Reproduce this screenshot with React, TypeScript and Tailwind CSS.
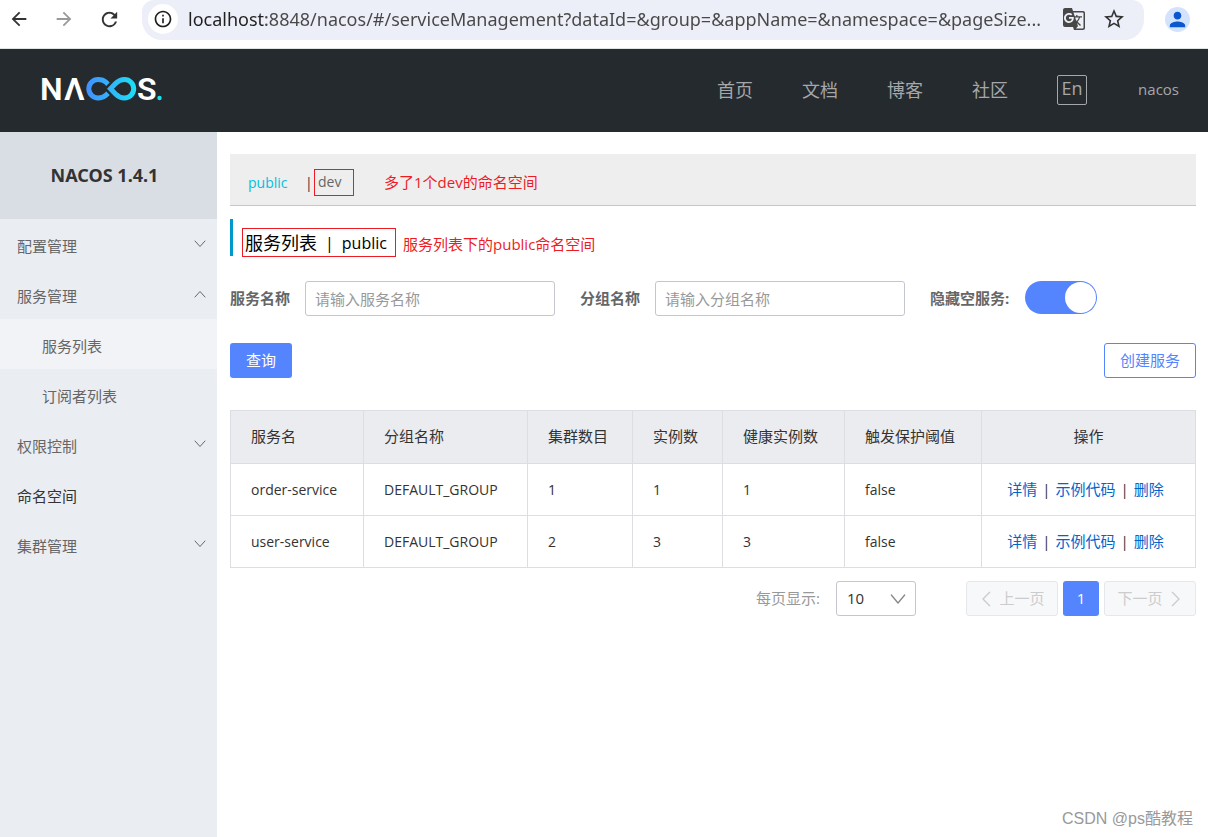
import { useState } from "react";
import {
  MdArrowBack,
  MdArrowForward,
  MdGTranslate,
  MdInfoOutline,
  MdPerson,
  MdRefresh,
  MdStarBorder,
} from "react-icons/md";

const NAV_LINKS = ["首页", "文档", "博客", "社区"];

const MENU = [
  { label: "配置管理", arrow: "down" },
  {
    label: "服务管理",
    arrow: "up",
    children: [{ label: "服务列表", active: true }, { label: "订阅者列表" }],
  },
  { label: "权限控制", arrow: "down" },
  { label: "命名空间" },
  { label: "集群管理", arrow: "down" },
];

const COLUMNS = [
  { title: "服务名", width: "w-[133px]" },
  { title: "分组名称", width: "w-[164px]" },
  { title: "集群数目", width: "w-[105px]" },
  { title: "实例数", width: "w-[90px]" },
  { title: "健康实例数", width: "w-[122px]" },
  { title: "触发保护阈值", width: "w-[137px]" },
];

const SERVICES = [
  { name: "order-service", group: "DEFAULT_GROUP", clusters: 1, instances: 1, healthy: 1 },
  { name: "user-service", group: "DEFAULT_GROUP", clusters: 2, instances: 3, healthy: 3 },
];

const URL_TEXT =
  "localhost:8848/nacos/#/serviceManagement?dataId=&group=&appName=&namespace=&pageSize...";

const Chevron = ({ points, className }: { points: string; className: string }) => (
  <svg
    viewBox="0 0 12 12"
    fill="none"
    stroke="currentColor"
    strokeLinecap="round"
    strokeLinejoin="round"
    className={className}
    aria-hidden="true"
  >
    <polyline points={points} />
  </svg>
);

const BrowserBar = () => (
  <div className="flex h-[49px] items-start border-b border-[#dfe3e1] bg-white">
    <div className="flex h-[38px] w-[142px] items-center gap-[23px] pl-2">
      <button type="button" aria-label="Back" className="text-[#333]">
        <MdArrowBack size={22} />
      </button>
      <button type="button" aria-label="Forward" className="text-[#999]">
        <MdArrowForward size={22} />
      </button>
      <button type="button" aria-label="Reload" className="text-[#333]">
        <MdRefresh size={23} />
      </button>
    </div>
    <div className="flex h-10 flex-1 items-center rounded-b-[20px] rounded-tl-xl rounded-tr-xl bg-[#eceef8] pr-[18px] pb-0.5 pl-1.5">
      <span className="flex size-[30px] shrink-0 items-center justify-center rounded-full bg-white text-[#1f1f1f]">
        <MdInfoOutline size={20} />
      </span>
      <input
        type="text"
        aria-label="Address"
        defaultValue={URL_TEXT}
        className="ml-2.5 min-w-0 flex-1 bg-[linear-gradient(90deg,#1f1f1f_78px,#474747_78px)] bg-clip-text font-['Noto_Sans',sans-serif] text-lg text-transparent outline-none"
      />
      <button type="button" aria-label="Translate" className="text-[#474747]">
        <MdGTranslate size={24} />
      </button>
      <button type="button" aria-label="Bookmark" className="ml-4 text-[#333]">
        <MdStarBorder size={24} />
      </button>
    </div>
    <button
      type="button"
      aria-label="Profile"
      className="mt-[7px] mr-[18px] ml-[21px] flex size-[25px] items-center justify-center rounded-full bg-[#d3e3fd] text-[#0b57d0]"
    >
      <MdPerson size={23} />
    </button>
  </div>
);

const Logo = () => (
  <svg width="128" height="44" viewBox="-2 -6 128 44" role="img" aria-label="NACOS">
    <defs>
      <linearGradient id="loop" gradientUnits="userSpaceOnUse" x1="46" y1="0" x2="96" y2="0">
        <stop offset="0" stopColor="#4390ff" />
        <stop offset="1" stopColor="#1be1f6" />
      </linearGradient>
    </defs>
    <g fill="#fff" fontFamily="Roboto, sans-serif" fontSize="32" fontWeight="600">
      <text x="-1" y="25">
        N
      </text>
      <text x="23" y="25">
        Λ
      </text>
      <text x="96" y="25">
        S
      </text>
    </g>
    <g fill="none" stroke="url(#loop)" strokeWidth="5">
      <path d="M67 9.200L65 7.300C62.500 5 60 4.500 57 4.500A9.200 9.200 0 0 0 57 22.900C60 22.900 62.500 22.300 65 20.100L67 18.200" />
      <path d="M69.500 13.700L74.500 8.500C77.500 5.500 80 4.500 83.500 4.500A9.200 9.200 0 0 1 83.500 22.900C80 22.900 77.500 21.900 74.500 18.900Z" />
    </g>
    <circle cx="118.500" cy="23" r="2.200" fill="#1be1f6" />
  </svg>
);

const Header = () => (
  <header className="flex h-[83px] items-center justify-between bg-[#252a2f] pr-[29px] pl-[39px] text-[#a5a7a9]">
    <a href="#home">
      <Logo />
    </a>
    <nav className="flex items-center pb-0.5 text-lg">
      {NAV_LINKS.map((link) => (
        <a key={link} href="#nav" className="mr-[49px]">
          {link}
        </a>
      ))}
      <button
        type="button"
        className="mr-[51px] size-[30px] rounded-xs border border-[#a5a7a9] pb-1 leading-6"
      >
        En
      </button>
      <a href="#user" className="text-[15px] font-medium">
        nacos
      </a>
    </nav>
  </header>
);

const Sidebar = () => (
  <aside className="w-[217px] shrink-0 bg-[#eaedf2] text-[15px] text-[#666]">
    <h1 className="flex h-[87px] items-center justify-center bg-[#d9dde4] pr-2 pb-0.5 font-['Noto_Sans',sans-serif] text-lg font-bold text-[#333]">
      NACOS 1.4.1
    </h1>
    <ul>
      {MENU.map((item) => (
        <li key={item.label}>
          <a
            href="#menu"
            className={`flex h-[50px] items-center justify-between pt-1 pr-[11px] pl-[17px] ${item.arrow ? "" : "text-[#333]"}`}
          >
            {item.label}
            {item.arrow && (
              <Chevron
                points={item.arrow === "up" ? "1,9 6,3.500 11,9" : "1,3 6,8.500 11,3"}
                className="mb-1 size-3"
              />
            )}
          </a>
          {item.children && (
            <ul>
              {item.children.map((child) => (
                <li key={child.label}>
                  <a
                    href="#menu"
                    className={`flex h-[50px] items-center pt-1 pl-[42px] ${child.active ? "bg-[#f2f3f7]" : ""}`}
                  >
                    {child.label}
                  </a>
                </li>
              ))}
            </ul>
          )}
        </li>
      ))}
    </ul>
  </aside>
);

const Filters = () => {
  const [hideEmpty, setHideEmpty] = useState(true);
  const inputClass =
    "ml-[15px] mr-[25px] h-[35px] w-[250px] rounded-[3px] border border-[#c4c6cf] px-[9px] text-[15px] placeholder:text-[#999]";

  return (
    <form className="mt-[25px] flex items-center text-[15px] text-[#666]">
      <label htmlFor="service" className="font-bold">
        服务名称
      </label>
      <input id="service" type="text" placeholder="请输入服务名称" className={inputClass} />
      <label htmlFor="group" className="font-bold">
        分组名称
      </label>
      <input id="group" type="text" placeholder="请输入分组名称" className={inputClass} />
      <label htmlFor="hide-empty" className="w-20 font-bold">
        隐藏空服务:
      </label>
      <input
        id="hide-empty"
        type="checkbox"
        role="switch"
        checked={hideEmpty}
        onChange={(event) => setHideEmpty(event.target.checked)}
        className="mb-0.5 ml-[15px] flex h-[33px] w-[72px] appearance-none rounded-full bg-gray-300 p-px before:size-[31px] before:rounded-full before:bg-white checked:justify-end checked:bg-[#5584ff]"
      />
    </form>
  );
};

const ServiceTable = () => (
  <table className="mt-8 w-full table-fixed border-collapse text-left text-[15px] text-[#333]">
    <thead>
      <tr className="h-[53px] bg-[#ebecf0]">
        {COLUMNS.map((col) => (
          <th
            key={col.title}
            className={`border border-[#dcdee3] pb-0.5 pl-5 font-normal whitespace-nowrap ${col.width}`}
          >
            {col.title}
          </th>
        ))}
        <th className="border border-[#dcdee3] pb-0.5 text-center font-normal">操作</th>
      </tr>
    </thead>
    <tbody>
      {SERVICES.map((row) => (
        <tr key={row.name} className="h-[52px]">
          {[row.name, row.group, row.clusters, row.instances, row.healthy, "false"].map(
            (cell, i) => (
              <td key={i} className="border border-[#dcdee3] pl-5 text-sm whitespace-nowrap">
                {cell}
              </td>
            )
          )}
          <td className="border border-[#dcdee3] whitespace-nowrap">
            <div className="flex justify-center gap-[5px] pr-1.5 text-[#06c]">
              <a href="#detail">详情</a>
              <span className="text-[#333]">|</span>
              <a href="#code">示例代码</a>
              <span className="text-[#333]">|</span>
              <a href="#delete">删除</a>
            </div>
          </td>
        </tr>
      ))}
    </tbody>
  </table>
);

const Pagination = () => {
  const stepClass =
    "flex h-[35px] w-[92px] items-center justify-center gap-1 rounded-[3px] border border-[#e6e7eb] bg-[#f7f8fa] text-[#ccc]";

  return (
    <div className="mt-[13px] flex items-center justify-end text-[15px]">
      <label htmlFor="page-size" className="mr-2 w-[72px] whitespace-nowrap text-[#999]">
        每页显示:
      </label>
      <div className="relative mr-[50px]">
        <select
          id="page-size"
          defaultValue="10"
          className="h-[35px] w-20 appearance-none rounded-[3px] border border-[#c4c6cf] bg-white pl-2.5 text-[#333]"
        >
          <option>10</option>
          <option>20</option>
          <option>50</option>
        </select>
        <Chevron
          points="1,3 6,9 11,3"
          className="pointer-events-none absolute top-2.5 right-2.5 size-4 text-[#888]"
        />
      </div>
      <button type="button" disabled className={stepClass}>
        <Chevron points="8,1 3,6 8,11" className="size-4" />
        上一页
      </button>
      <button type="button" className="mx-[5px] h-[35px] w-9 rounded-[3px] bg-[#5584ff] text-white">
        1
      </button>
      <button type="button" disabled className={stepClass}>
        下一页
        <Chevron points="4,1 9,6 4,11" className="size-4" />
      </button>
    </div>
  );
};

const App = () => (
  <div className="relative flex min-h-screen flex-col bg-white font-['Open_Sans','Noto_Sans_CJK_SC',sans-serif]">
    <BrowserBar />
    <Header />
    <div className="flex flex-1">
      <Sidebar />
      <main className="min-w-0 flex-1 pt-[22px] pr-3 pl-[13px]">
        <div className="flex h-[52px] items-center border-b border-[#c7c7c7] bg-[#eee] pt-1.5 pl-[18px] text-sm text-[#666]">
          <a href="#public" className="w-[57px] text-[#00c1de]">
            public
          </a>
          <span className="w-[9px] text-[#333]">|</span>
          <a href="#dev" className="h-[27px] w-10 border border-[#ed1c24] pl-[3px] leading-6">
            dev
          </a>
          <span className="ml-[30px] text-[15px] text-[#ed1c24]">多了1个dev的命名空间</span>
        </div>
        <div className="mt-[13px] flex h-[37px] border-l-3 border-[#09c] pl-[9px]">
          <h2 className="mt-[9px] flex h-[29px] w-[154px] shrink-0 items-center gap-2 border border-[#ed1c24] pl-0.5 text-base whitespace-nowrap text-black">
            <span className="text-lg">服务列表</span>
            <span>|</span>
            <span>public</span>
          </h2>
          <span className="mt-[14px] ml-[7px] text-[15px] whitespace-nowrap text-[#ed1c24]">
            服务列表下的public命名空间
          </span>
        </div>
        <Filters />
        <div className="mt-[27px] flex justify-between text-[15px]">
          <button type="button" className="h-[35px] w-[62px] rounded-[3px] bg-[#5584ff] text-white">
            查询
          </button>
          <button
            type="button"
            className="h-[35px] w-[92px] rounded-[3px] border border-[#5584ff] text-[#5584ff]"
          >
            创建服务
          </button>
        </div>
        <ServiceTable />
        <Pagination />
      </main>
    </div>
    <span className="absolute right-[15px] bottom-1.5 font-['Liberation_Sans','Noto_Sans_CJK_SC',sans-serif] text-base text-[#999]">
      CSDN @ps酷教程
    </span>
  </div>
);

export default App;
